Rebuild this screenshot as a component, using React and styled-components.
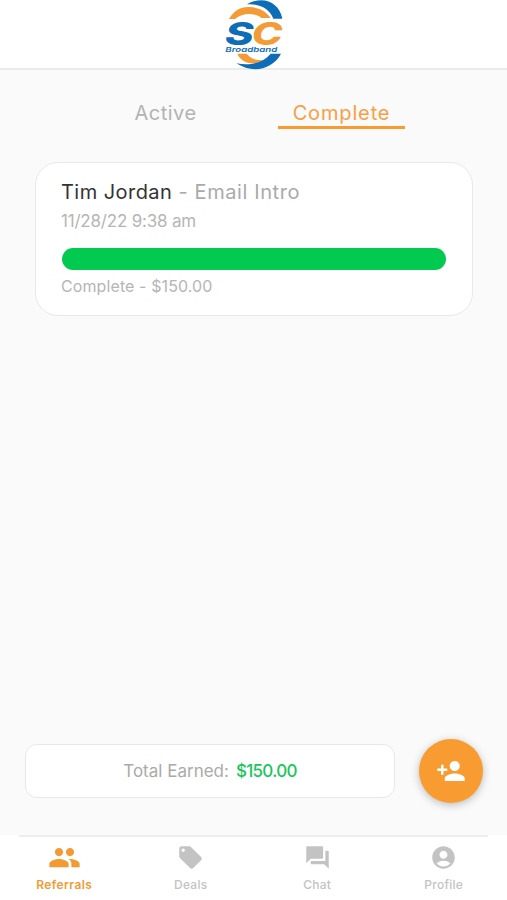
import React from 'react';
import styled, { createGlobalStyle } from 'styled-components';
import { MdPeople, MdLocalOffer, MdForum, MdAccountCircle, MdPersonAdd } from 'react-icons/md';

const Global = createGlobalStyle`
  * { box-sizing: border-box; }
  body { margin: 0; background: #fafafa; font-family: Inter, "Open Sans", sans-serif; }
`;
const Screen = styled.div`
  width: 507px; height: 900px; display: flex; flex-direction: column; overflow: hidden; background: #fafafa;
`;
const Header = styled.header`
  height: 70px; flex: none; display: flex; justify-content: center; background: #fff;
  border-bottom: 2px solid #ebebeb;
  svg { flex: none; margin-left: 3px; }
`;
const Tabs = styled.nav`
  display: flex; gap: 49px; padding: 30px 0 0 102px; height: 92px;
`;
const Tab = styled.button`
  width: 127px; height: 29px; padding: 0; border: 0; background: none;
  border-bottom: 3px solid ${p => (p.$active ? '#f89c32' : 'transparent')};
  color: ${p => (p.$active ? '#f7a045' : '#b3b3b3')};
  font: 400 20px/24px Inter, sans-serif; letter-spacing: ${p => p.$track}px;
`;
const Card = styled.article`
  width: 438px; height: 154px; margin-left: 35px; padding: 17px 25px 0; flex: none;
  border: 1.5px solid #e8e8e8; border-radius: 23px; background: #fff; color: #b5b5b5; white-space: nowrap;
`;
const Title = styled.h2`
  margin: 0; color: #aaa; font-weight: 400; font-size: 20px; line-height: 24px; letter-spacing: 0.6px;
  span { color: #333; letter-spacing: 0.45px; }
`;
const Meta = styled.div`
  font-size: ${p => p.$size}px; line-height: 20px; letter-spacing: ${p => p.$track}px; margin-top: ${p => p.$top}px;
`;
const Progress = styled.div`
  height: 22px; margin: 17px 1px 0; border-radius: 11px; background: #02c950;
`;
const Bottom = styled.div`
  display: flex; align-items: center; gap: 24px; margin: auto 0 32px 25px;
`;
const Total = styled.div`
  width: 370px; height: 54px; display: flex; align-items: center; justify-content: center; gap: 7px;
  border: 1.5px solid #e8e8e8; border-radius: 12px; background: #fff; color: #aaa; font-size: 17px;
`;
const Amount = styled.span`
  color: #1bc65c; font-weight: 500; letter-spacing: -0.7px;
`;
const AddButton = styled.button`
  width: 64px; height: 64px; padding: 0; border: 0; border-radius: 50%; background: #f89c32; color: #fff;
  display: flex; align-items: center; justify-content: center; box-shadow: 0 2px 8px rgba(0, 0, 0, .25);
`;
const NavBar = styled.nav`
  height: 65px; flex: none; display: grid; grid-template-columns: repeat(4, 126.5px); grid-template-rows: 2px 63px;
  background: #fff; padding-left: 1px;
  &::before { content: ''; grid-column: 1 / -1; width: 469px; margin-left: 18px; background: #ededed; }
`;
const NavItem = styled.a`
  display: flex; flex-direction: column; align-items: center; padding-top: 4px;
  color: ${p => (p.$active ? '#f39a33' : '#c3c3c3')};
  font-size: 12px; line-height: 14px; font-weight: ${p => (p.$active ? 600 : 500)};
  letter-spacing: ${p => (p.$active ? 0.4 : 0.25)}px;
`;
const IconSlot = styled.span`
  height: 33px; margin-bottom: 4px; display: flex; align-items: center;
`;

const Logo = () => (
  <svg width="84" height="76" viewBox="0 0 252 228" aria-label="SC Broadband">
    <path d="M48 57 C62 32 84 19 110 21 C140 23 160 36 173 54 L146 54 C124 38 90 37 66 57Z" fill="#f59b35" />
    <path d="M102 13 C151 -15 199 8 208 56 L181 56 C171 28 142 10 102 13Z" fill="#0e6db7" />
    <path d="M73 161 L101 161 C112 175 128 181 154 181 C120 199 84 188 73 161Z" fill="#f59b35" />
    <path d="M204 161 C181 205 122 224 70 190 C117 198 151 187 173 161Z" fill="#0e6db7" />
    <g fontFamily="Inter" fontWeight="800" fontStyle="italic">
      <text x="36" y="134" fontSize="95" fill="#0e6db7" textLength="86" lengthAdjust="spacingAndGlyphs">S</text>
      <text x="116" y="134" fontSize="95" fill="#f59b35" textLength="92" lengthAdjust="spacingAndGlyphs">C</text>
      <text x="37" y="155" fontSize="19" fontWeight="600" fill="#0e6db7" textLength="156" lengthAdjust="spacingAndGlyphs">Broadband</text>
    </g>
  </svg>
);

const NAV = [
  { label: 'Referrals', Icon: MdPeople, size: 33, active: true },
  { label: 'Deals', Icon: MdLocalOffer, size: 27 },
  { label: 'Chat', Icon: MdForum, size: 27 },
  { label: 'Profile', Icon: MdAccountCircle, size: 27 },
];

export default function App() {
  return (
    <Screen>
      <Global />
      <Header><Logo /></Header>
      <Tabs>
        <Tab $track={0.5}>Active</Tab>
        <Tab $active $track={0.85}>Complete</Tab>
      </Tabs>
      <Card>
        <Title><span>Tim Jordan</span> - Email Intro</Title>
        <Meta $size={17} $track={-0.2} $top={7}>11/28/22 9:38 am</Meta>
        <Progress />
        <Meta $size={16} $track={0.1} $top={6}>Complete - $150.00</Meta>
      </Card>
      <Bottom>
        <Total><span>Total Earned:</span><Amount>$150.00</Amount></Total>
        <AddButton aria-label="Add referral"><MdPersonAdd size={30} /></AddButton>
      </Bottom>
      <NavBar>
        {NAV.map(({ label, Icon, size, active }) => (
          <NavItem key={label} $active={active}><IconSlot><Icon size={size} /></IconSlot>{label}</NavItem>
        ))}
      </NavBar>
    </Screen>
  );
}
